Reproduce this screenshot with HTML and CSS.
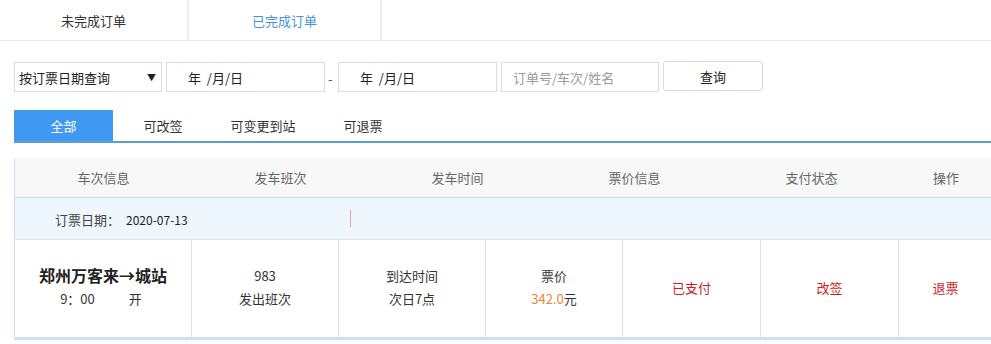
FILE: index.html
```html
<!DOCTYPE html>
<html lang="zh-CN">
<head>
<meta charset="utf-8">
<title>订单</title>
<link rel="stylesheet" href="styles.css">
</head>
<body>
<div class="topnav">
  <div class="ttab t1">未完成订单</div>
  <div class="ttab t2 active">已完成订单</div>
</div>
<div class="filters">
  <div class="select"><span>按订票日期查询</span><span class="arrow">▼</span></div>
  <div class="inp date"><span>年 &nbsp;/月/日</span></div>
  <span class="dash">-</span>
  <div class="inp date"><span>年 &nbsp;/月/日</span></div>
  <div class="inp text"><span class="ph">订单号/车次/姓名</span></div>
  <div class="btn">查询</div>
</div>
<div class="subtabs">
  <div class="stab on">全部</div>
  <div class="stab">可改签</div>
  <div class="stab">可变更到站</div>
  <div class="stab">可退票</div>
</div>
<div class="table">
  <div class="thead">
    <div class="th">车次信息</div>
    <div class="th">发车班次</div>
    <div class="th">发车时间</div>
    <div class="th">票价信息</div>
    <div class="th">支付状态</div>
    <div class="th last">操作</div>
  </div>
  <div class="daterow">
    <span class="dlabel">订票日期：</span><span class="dval">2020-07-13</span>
    <span class="cursor"></span>
  </div>
  <div class="trow">
    <div class="td c1">
      <div class="route">郑州万客来→城站</div>
      <div class="time"><span>9：00</span><span>开</span></div>
    </div>
    <div class="td c2"><div>983</div><div>发出班次</div></div>
    <div class="td c3"><div>到达时间</div><div>次日7点</div></div>
    <div class="td c4"><div>票价</div><div><span class="price">342.0</span>元</div></div>
    <div class="td c5 red">已支付</div>
    <div class="td c6 red">改签</div>
    <div class="td c7 red">退票</div>
  </div>
</div>
</body>
</html>
```
FILE: styles.css
```css
* { box-sizing: border-box; }
html, body { margin: 0; padding: 0; background: #fff; overflow: hidden; }
body {
  font-family: "Noto Sans CJK SC", "Microsoft YaHei", sans-serif;
  font-size: 13px;
  color: #333;
  width: 991px;
}
.topnav {
  display: flex;
  height: 41px;
  border-bottom: 1px solid #e8e8e8;
}
.ttab {
  display: flex;
  align-items: center;
  justify-content: center;
  height: 40px;
  border-right: 2px solid #eeeeee;
  font-size: 13px;
  color: #333;
}
.t1 { width: 189px; }
.t2 { width: 193px; }
.ttab.active { color: #4b92d6; }

.filters {
  display: flex;
  align-items: flex-start;
  padding: 20px 0 0 14px;
}
.select {
  display: flex;
  justify-content: space-between;
  align-items: center;
  width: 148px;
  height: 30px;
  border: 1px solid #dcdcdc;
  padding: 0 5px 0 4px;
  margin-top: 1px;
  color: #222;
}
.select .arrow { font-size: 9px; color: #222; }
.inp {
  display: flex;
  align-items: center;
  height: 30px;
  border: 1px solid #dcdcdc;
  margin-top: 1px;
  color: #222;
}
.date { width: 159px; padding-left: 21px; margin-left: 4px; }
.dash { margin: 8px 0 0 3px; color: #555; width: 6px; }
.text { width: 158px; margin-left: 4px; padding-left: 11px; }
.ph { color: #9a9a9a; }
.btn {
  display: flex;
  align-items: center;
  justify-content: center;
  width: 100px;
  height: 30px;
  margin-left: 4px;
  border: 1px solid #d9d9d9;
  border-radius: 3px;
  color: #222;
}

.subtabs {
  display: flex;
  margin: 18px 0 0 14px;
  height: 33px;
  border-bottom: 2px solid #5b9ec6;
}
.stab {
  width: 100px;
  height: 31px;
  display: flex;
  align-items: center;
  justify-content: center;
  color: #333;
}
.stab.on { width: 99px; background: #3f99f2; color: #fff; }

.table {
  margin: 15px 0 0 14px;
  width: 990px;
  border-left: 1px solid #cfe0ec;
  border-bottom: 3px solid #cfe1ee;
}
.thead {
  display: flex;
  height: 40px;
  background: #f8f8f8;
  border-bottom: 1px solid #c8dbe9;
}
.th {
  width: 177px;
  flex: none;
  display: flex;
  align-items: center;
  justify-content: center;
  color: #666;
}
.th.last { width: 92px; }
.daterow {
  display: flex;
  align-items: center;
  height: 42px;
  background: #eef7fe;
  border-bottom: 1px solid #dfe6ec;
  padding-left: 40px;
  padding-top: 1px;
  position: relative;
}
.dlabel { color: #444; }
.dval { font-size: 12px; color: #222; margin-left: 6px; }
.cursor {
  position: absolute;
  left: 335px;
  top: 12px;
  width: 1px;
  height: 17px;
  background: #f09aa8;
}
.trow {
  display: flex;
  height: 97px;
}
.td {
  flex: none;
  display: flex;
  flex-direction: column;
  align-items: center;
  justify-content: center;
  border-right: 1px solid #e2e2e2;
  line-height: 23px;
  color: #333;
  padding-bottom: 4px;
}
.c1 { width: 177px; }
.c2 { width: 147px; }
.c3 { width: 147px; }
.c4 { width: 137px; }
.c5 { width: 138px; }
.c6 { width: 138px; }
.c7 { width: 93px; border-right: none; }
.route { font-size: 16px; font-weight: bold; color: #222; line-height: 23px; }
.time { display: flex; gap: 34px; color: #333; padding-right: 4px; }
.price { color: #e8883a; }
.td.red { color: #c81e1e; padding-bottom: 2px; }
```
